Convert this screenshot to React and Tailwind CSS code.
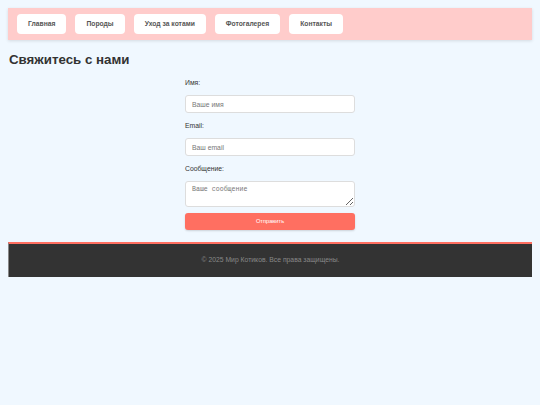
export default function App() {
  const links = ['Главная', 'Породы', 'Уход за котами', 'Фотогалерея', 'Контакты'];

  return (
    <div className="min-h-screen bg-[#f0f8ff] p-2 font-['Liberation_Sans',Arial,sans-serif] text-[#333]">
      {/* Navigation */}
      <header className="bg-[#ffcccb] shadow-[0_1px_3px_rgba(0,0,0,0.12)] px-[9px] py-[6px]">
        <nav className="flex gap-[9px]">
          {links.map((l) => (
            <a
              key={l}
              href="#"
              className="bg-white rounded-[4px] h-[20px] px-[11px] flex items-center text-[6.75px] font-bold text-[#555]"
            >
              {l}
            </a>
          ))}
        </nav>
      </header>

      <h1 className="mt-[10px] ml-px text-[13.3px] leading-[20px] font-bold text-[#333]">Свяжитесь с нами</h1>

      {/* Contact form */}
      <form className="w-[170px] mx-auto mt-[8px] flex flex-col text-[6.8px]">
        <label className="text-[#333] leading-[10px]">Имя:</label>
        <input
          placeholder="Ваше имя"
          className="mt-[7px] h-[18px] px-[6px] bg-white border border-[#ddd] rounded-[3px] text-[6.8px] placeholder:text-[#777] outline-none"
        />
        <label className="mt-[8px] text-[#333] leading-[10px]">Email:</label>
        <input
          placeholder="Ваш email"
          className="mt-[7px] h-[18px] px-[6px] bg-white border border-[#ddd] rounded-[3px] text-[6.8px] placeholder:text-[#777] outline-none"
        />
        <label className="mt-[8px] text-[#333] leading-[10px]">Сообщение:</label>
        <textarea
          placeholder="Ваше сообщение"
          className="mt-[7px] h-[26px] px-[6px] py-[3px] bg-white border border-[#ddd] rounded-[3px] font-['Liberation_Mono',monospace] text-[6.6px] placeholder:text-[#777] outline-none"
        />
        <button
          type="button"
          className="mt-[6px] h-[17px] bg-[#ff6f61] text-white rounded-[3px] text-[5.7px] shadow-[0_1px_2px_rgba(0,0,0,0.15)]"
        >
          Отправить
        </button>
      </form>

      {/* Footer */}
      <footer className="mt-[12px] bg-[#333] border-t-[2px] border-[#ff6f61] border-l border-l-[#888] h-[35px] flex items-center justify-center">
        <p className="text-[6.8px] text-[#888]">© 2025 Мир Котиков. Все права защищены.</p>
      </footer>
    </div>
  );
}
